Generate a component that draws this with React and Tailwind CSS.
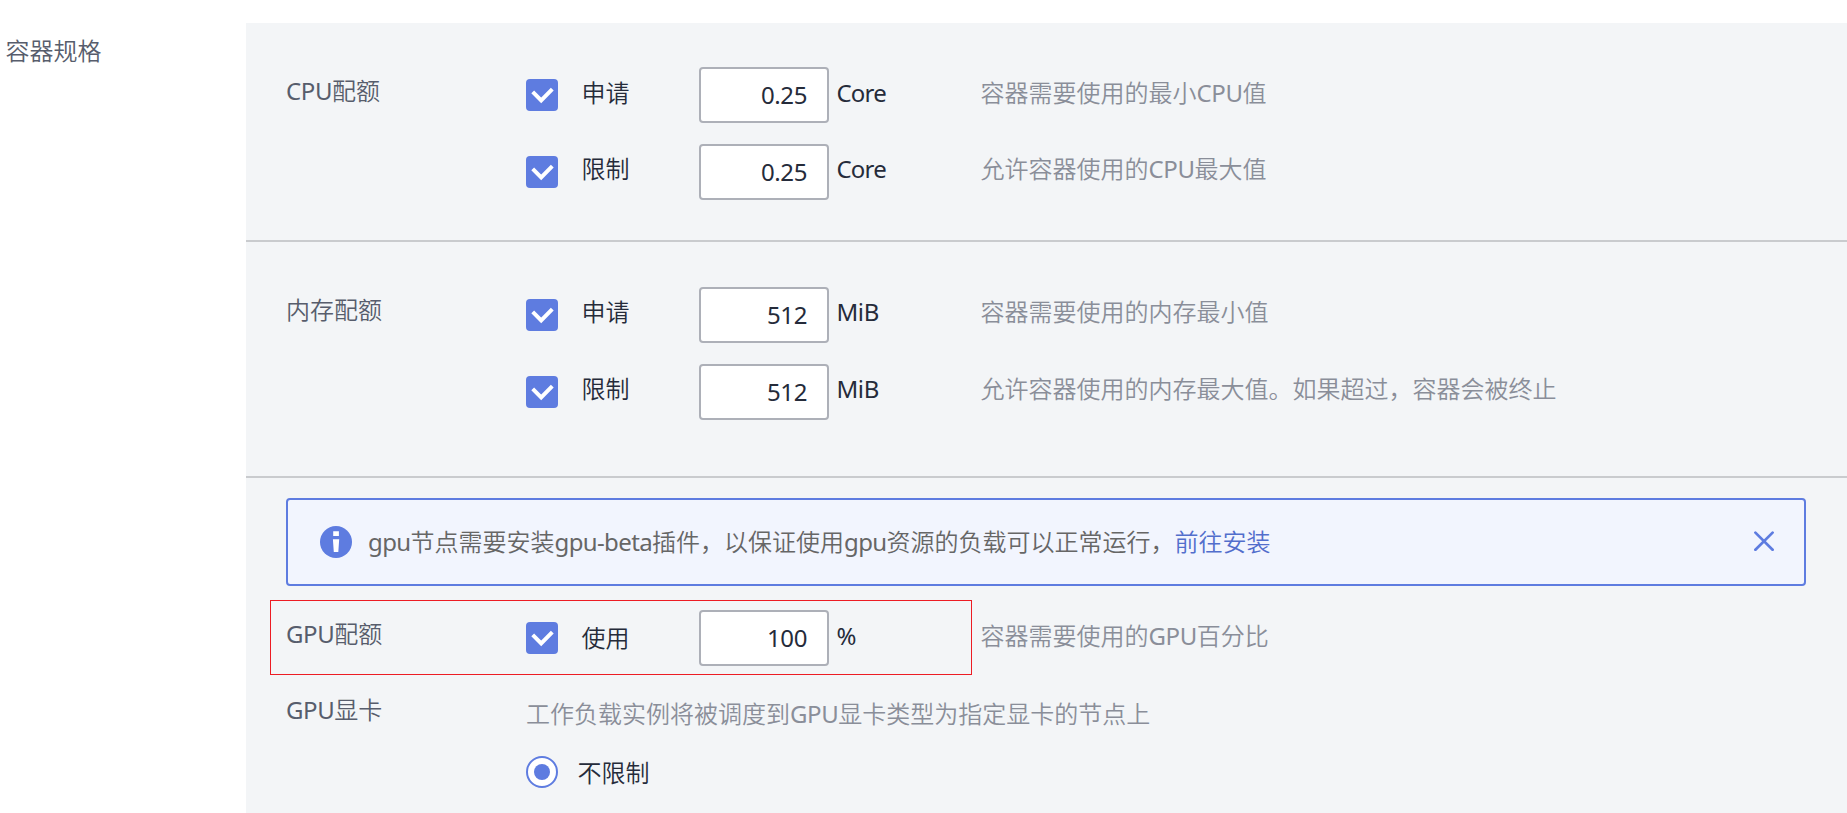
import React from "react";

// Letter spacing of a Latin run: capitals and digits are set looser than lower case.
function tracking(run) {
  if (/^[A-Z0-9.%]+$/.test(run) || run === "MiB") return "tracking-[-0.4px]";
  if (/^[a-z-]+$/.test(run)) return "tracking-[-0.62px]";
  return "tracking-[-0.8px]";
}

// Renders mixed Chinese / Latin text, tightening the Latin runs.
function Text({ children, className = "" }) {
  const parts = children.split(/([A-Za-z0-9.%-]+)/).filter(Boolean);
  return (
    <div className={`h-6 shrink-0 whitespace-nowrap text-[24px] leading-[24px] font-[350] ${className}`}>
      {parts.map((part, i) =>
        /^[A-Za-z0-9.%-]/.test(part) ? (
          <span key={i} className={`font-normal ${tracking(part)}`}>{part}</span>
        ) : (
          <span key={i}>{part}</span>
        )
      )}
    </div>
  );
}

function Checkbox() {
  return (
    <svg className="mt-3 h-8 w-8 shrink-0" viewBox="0 0 32 32">
      <rect width="32" height="32" rx="4" fill="#5e7ce0" />
      <path d="M6.7 12.8 15.2 21.3 26.3 10.2" fill="none" stroke="#fff" strokeWidth="4" />
    </svg>
  );
}

function QuotaRow({ name, value, unit, hint, nameTop = "mt-[13px]", unitTop = "mt-[13px]", hintTop = "mt-[13px]" }) {
  return (
    <div className="flex h-14 items-start">
      <Checkbox />
      <div className="w-[141px] shrink-0 pl-[23.5px]">
        <Text className={`text-[#252b3a] ${nameTop}`}>{name}</Text>
      </div>
      <div className="flex h-14 w-[130px] shrink-0 items-center justify-end rounded-[4px] border-2 border-[#adb0b8] bg-white pr-5">
        <Text className="text-[#252b3a]">{value}</Text>
      </div>
      <div className="w-[151.5px] shrink-0 pl-[7.5px]">
        <Text className={`text-[#252b3a] ${unitTop}`}>{unit}</Text>
      </div>
      <Text className={`text-[#8a8e99] ${hintTop}`}>{hint}</Text>
    </div>
  );
}

export default function App() {
  return (
    <div
      lang="zh-CN"
      className="flex h-[813px] w-[1847px] overflow-hidden bg-white pt-[23px] font-['Noto_Sans','Noto_Sans_CJK_SC',sans-serif]"
    >
      <div className="w-[246px] shrink-0 pt-4 pl-[5.5px]">
        <Text className="text-[#575d6c]">容器规格</Text>
      </div>

      <main className="flex-1 bg-[#f3f5f7]">
        <section className="flex h-[219px] border-b-2 border-[#c9cbce] pt-11 pl-10">
          <div className="w-60 shrink-0 pt-3">
            <Text className="text-[#575d6c]">CPU配额</Text>
          </div>
          <div className="flex flex-col gap-[21px]">
            <QuotaRow name="申请" value="0.25" unit="Core" hint="容器需要使用的最小CPU值" nameTop="mt-[14px]" unitTop="mt-[14px]" hintTop="mt-[14px]" />
            <QuotaRow name="限制" value="0.25" unit="Core" hint="允许容器使用的CPU最大值" />
          </div>
        </section>

        <section className="flex h-[236px] border-b-2 border-[#c9cbce] pt-[45px] pl-10">
          <div className="w-60 shrink-0 pt-[11px]">
            <Text className="text-[#575d6c]">内存配额</Text>
          </div>
          <div className="flex flex-col gap-[21px]">
            <QuotaRow name="申请" value="512" unit="MiB" hint="容器需要使用的内存最小值" />
            <QuotaRow name="限制" value="512" unit="MiB" hint="允许容器使用的内存最大值。如果超过，容器会被终止" />
          </div>
        </section>

        <section className="pt-5 pl-10">
          <div className="flex h-[88px] w-[1520px] items-start rounded-[4px] border-2 border-[#5e7ce0] bg-[#f2f5fe] pl-8">
            <svg className="mt-[26px] h-8 w-8 shrink-0" viewBox="0 0 32 32">
              <circle cx="16" cy="16" r="16" fill="#5e7ce0" />
              <path d="M13.2 5.2h5.7v4.7h-5.7zM12.9 13.2h6.3l-.9 12.9h-4.5z" fill="#fff" />
            </svg>
            <Text className="mt-[30px] ml-4 text-[#666666]">gpu节点需要安装gpu-beta插件，以保证使用gpu资源的负载可以正常运行，</Text>
            <Text className="mt-[30px] text-[#526ecc]">前往安装</Text>
            <svg className="mt-[31px] mr-[30px] ml-auto h-5 w-5 shrink-0" viewBox="0 0 20 20">
              <path d="M1.4 1.6 18.6 18.8M18.6 1.6 1.4 18.8" stroke="#5e7ce0" strokeWidth="2.7" strokeLinecap="round" />
            </svg>
          </div>

          <div className="mt-[14px] -ml-4 flex h-[75px] w-[702px] border border-[#ed1c24] pt-[9px] pl-[15px]">
            <div className="w-60 shrink-0 pt-3">
              <Text className="text-[#575d6c]">GPU配额</Text>
            </div>
            <QuotaRow name="使用" value="100" unit="%" hint="容器需要使用的GPU百分比" nameTop="mt-4" unitTop="mt-[14px]" hintTop="mt-[14px]" />
          </div>

          <div className="flex pt-[23px]">
            <div className="w-60 shrink-0">
              <Text className="text-[#575d6c]">GPU显卡</Text>
            </div>
            <div>
              <Text className="mt-1 text-[#8a8e99]">工作负载实例将被调度到GPU显卡类型为指定显卡的节点上</Text>
              <div className="mt-[30px] flex">
                <svg className="h-8 w-8 shrink-0" viewBox="0 0 32 32">
                  <circle cx="16" cy="16" r="15" fill="#fff" stroke="#5e7ce0" strokeWidth="2" />
                  <circle cx="16" cy="16" r="8" fill="#5e7ce0" />
                </svg>
                <Text className="mt-[5px] ml-[19.5px] text-[#252b3a]">不限制</Text>
              </div>
            </div>
          </div>
        </section>
      </main>
    </div>
  );
}
